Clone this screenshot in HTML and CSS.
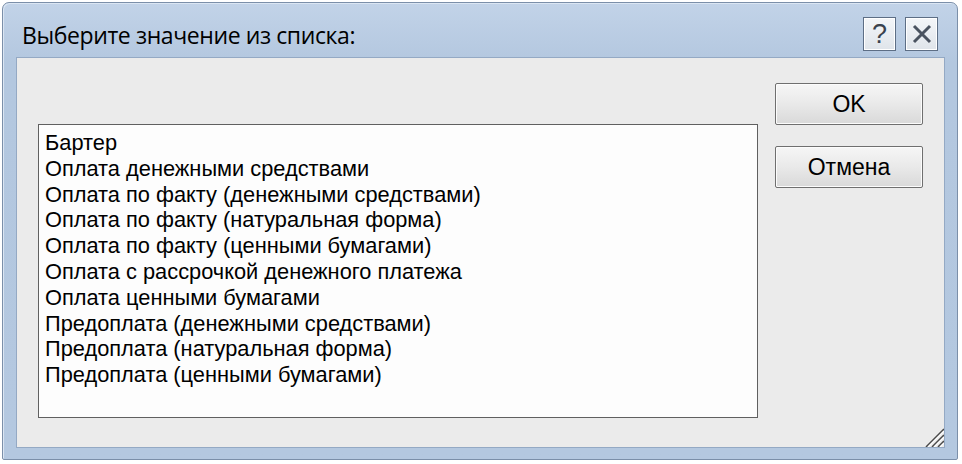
FILE: index.html
```html
<!DOCTYPE html>
<html lang="ru">
<head>
<meta charset="utf-8">
<title>Выберите значение из списка</title>
<link rel="stylesheet" href="styles.css">
</head>
<body>
<div class="window">
  <div class="titlebar">
    <div class="title">Выберите значение из списка:</div>
    <div class="caption-buttons">
      <div class="cap-btn help">?</div>
      <div class="cap-btn close">
        <svg width="20" height="20" viewBox="0 0 20 20"><path d="M2 2 L18 18 M18 2 L2 18" stroke="#4a5360" stroke-width="3" fill="none"/></svg>
      </div>
    </div>
  </div>
  <div class="client">
    <div class="listbox">
      <div class="item">Бартер</div>
      <div class="item">Оплата денежными средствами</div>
      <div class="item">Оплата по факту (денежными средствами)</div>
      <div class="item">Оплата по факту (натуральная форма)</div>
      <div class="item">Оплата по факту (ценными бумагами)</div>
      <div class="item">Оплата с рассрочкой денежного платежа</div>
      <div class="item">Оплата ценными бумагами</div>
      <div class="item">Предоплата (денежными средствами)</div>
      <div class="item">Предоплата (натуральная форма)</div>
      <div class="item">Предоплата (ценными бумагами)</div>
    </div>
    <div class="buttons">
      <div class="btn">OK</div>
      <div class="btn">Отмена</div>
    </div>
    <svg class="grip" width="22" height="20" viewBox="0 0 22 20">
      <path d="M4 20 L22 2 M10 20 L22 8 M16 20 L22 14" stroke="#4a4a4a" stroke-width="1.6" fill="none"/>
      <path d="M6 20 L22 4 M12 20 L22 10 M18 20 L22 16" stroke="#ffffff" stroke-width="1.2" fill="none"/>
    </svg>
  </div>
</div>
</body>
</html>
```
FILE: styles.css
```css
html, body {
  margin: 0;
  padding: 0;
  background: #ffffff;
}
body {
  width: 962px;
  height: 464px;
  overflow: hidden;
}
.window {
  margin: 2px 0 0 2px;
  width: 954px;
  height: 456px;
  border: 1px solid #7b8fa9;
  border-radius: 7px 7px 2px 2px;
  background: linear-gradient(#c2d3e8, #b3c7df 60px, #b4c8e0);
  display: flex;
  flex-direction: column;
  box-shadow: inset 1px 1px 0 #dbe6f3;
}
.titlebar {
  height: 54px;
  display: flex;
  align-items: flex-start;
  justify-content: space-between;
  padding: 0 19px 0 19px;
}
.title {
  font-family: "Open Sans", "Noto Sans", sans-serif;
  font-size: 23px;
  letter-spacing: -0.4px;
  color: #000;
  margin-top: 17px;
  line-height: 30px;
}
.caption-buttons {
  display: flex;
  gap: 9px;
  margin-top: 14px;
}
.cap-btn {
  width: 33px;
  height: 34px;
  border: 1px solid #5d6e85;
  background: linear-gradient(#f4f6f9, #dfe4ea);
  box-shadow: inset 0 0 0 1px #ffffff;
  display: flex;
  align-items: center;
  justify-content: center;
  box-sizing: border-box;
}
.cap-btn.help {
  font-family: "Liberation Sans", sans-serif;
  font-size: 27px;
  font-weight: normal;
  color: #3a424e;
}
.client {
  position: relative;
  flex: 1;
  margin: 0 12px 11px 13px;
  background: #ebebeb;
  border: 1px solid #94a9c4;
  display: flex;
  align-items: flex-start;
}
.listbox {
  margin: 66px 0 0 21px;
  width: 720px;
  height: 294px;
  border: 1px solid #606060;
  background: #fdfdfd;
  padding: 5px 0 0 6px;
  box-sizing: border-box;
  font-family: "Liberation Sans", sans-serif;
  font-size: 21.8px;
  color: #000;
}
.item {
  height: 25.8px;
  line-height: 25.8px;
  white-space: nowrap;
}
.buttons {
  margin: 25px 0 0 17px;
  display: flex;
  flex-direction: column;
  gap: 21px;
}
.btn {
  width: 148px;
  height: 42px;
  box-sizing: border-box;
  border: 1px solid #6f6f6f;
  border-radius: 2px;
  background: linear-gradient(#f6f6f6, #e9e9e9 50%, #d9d9d9);
  box-shadow: inset 0 0 0 1px #fcfcfc;
  display: flex;
  align-items: center;
  justify-content: center;
  font-family: "Liberation Sans", sans-serif;
  font-size: 23px;
  color: #000;
}
.grip {
  position: absolute;
  right: 0;
  bottom: 0;
}
```
